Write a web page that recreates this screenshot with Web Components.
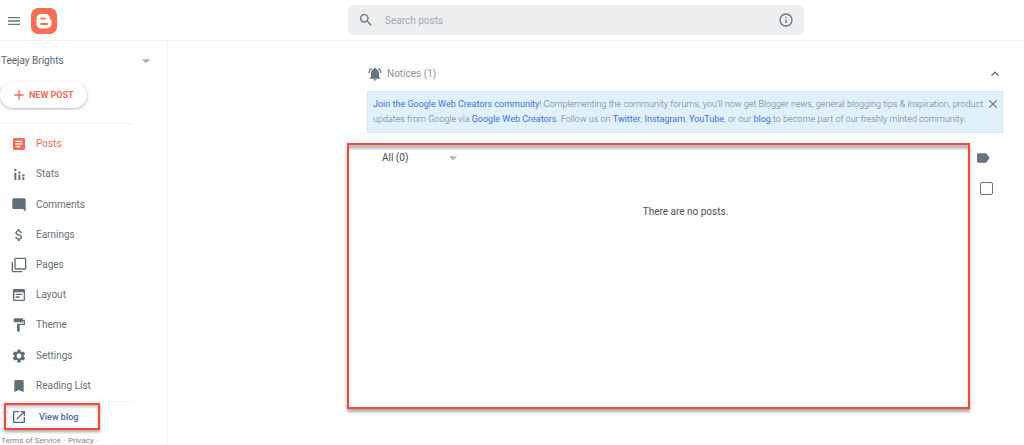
<!DOCTYPE html>
<html lang="en">
<head>
<meta charset="utf-8">
<meta name="viewport" content="width=device-width, initial-scale=1">
<title>Blogger: Posts</title>
<style>
  html, body { margin: 0; background: #fff; }
  body { font: 10px/16px Roboto, Arial, sans-serif; color: #5f6f77; --accent: #f96b52; --slate: #64757d; --line: #f1f1f2; }
</style>
</head>
<body>
<blog-app></blog-app>
<script>
const icons = {
  menu: '<path d="M3 18h18v-2H3v2zm0-5h18v-2H3v2zm0-7v2h18V6H3z"/>',
  search: '<path d="M15.5 14h-.79l-.28-.27A6.47 6.47 0 0 0 16 9.5 6.5 6.5 0 1 0 9.5 16c1.61 0 3.09-.59 4.23-1.57l.27.28v.79l5 4.99L20.49 19l-4.99-5zm-6 0a4.5 4.5 0 1 1 0-9 4.5 4.5 0 0 1 0 9z"/>',
  info: '<path d="M11 7h2v2h-2zm0 4h2v6h-2zm1-9a10 10 0 1 0 0 20 10 10 0 0 0 0-20zm0 18a8 8 0 1 1 0-16 8 8 0 0 1 0 16z"/>',
  drop: '<path d="M5 9l7 7 7-7z"/>',
  plus: '<path d="M19 13h-6v6h-2v-6H5v-2h6V5h2v6h6z"/>',
  posts: '<path d="M19 3H5a2 2 0 0 0-2 2v14c0 1.100.9 2 2 2h14a2 2 0 0 0 2-2V5a2 2 0 0 0-2-2zm-5 14H7v-2h7v2zm3-4H7v-2h10v2zm0-4H7V7h10v2z"/>',
  stats: '<path d="M5 10h3v11H5zM11 13h3v8h-3zM17 17h3v4h-3z"/><circle cx="6.500" cy="6" r="1.800"/><circle cx="12.500" cy="10" r="1.800"/><circle cx="18.500" cy="14" r="1.800"/>',
  comments: '<path d="M22 4a2 2 0 0 0-2-2H4a2 2 0 0 0-2 2v12c0 1.100.9 2 2 2h14l4 4z"/>',
  earnings: '<path d="M11.800 10.900c-2.270-.59-3-1.200-3-2.150 0-1.090 1.010-1.850 2.700-1.850 1.780 0 2.440.85 2.500 2.100h2.210c-.07-1.720-1.120-3.300-3.210-3.810V3h-3v2.160c-1.940.42-3.500 1.680-3.500 3.610 0 2.310 1.910 3.460 4.700 4.130 2.500.6 3 1.480 3 2.410 0 .69-.49 1.790-2.700 1.790-2.060 0-2.870-.92-2.980-2.100h-2.200c.12 2.190 1.760 3.420 3.680 3.830V21h3v-2.150c1.950-.37 3.500-1.500 3.500-3.550 0-2.840-2.430-3.810-4.700-4.400z"/>',
  pages: '<path d="M1 7h2v14h14v2H3a2 2 0 0 1-2-2zM7 1h14a2 2 0 0 1 2 2v14a2 2 0 0 1-2 2H7a2 2 0 0 1-2-2V3a2 2 0 0 1 2-2zm0 2v14h14V3z" fill-rule="evenodd"/>',
  layout: '<path d="M19 3H5a2 2 0 0 0-2 2v14a2 2 0 0 0 2 2h14a2 2 0 0 0 2-2V5a2 2 0 0 0-2-2zM5 19V8h14v11zM7 10h10v2H7zm0 4h6v2H7z" fill-rule="evenodd"/>',
  theme: '<path d="M18 4V3a1 1 0 0 0-1-1H5a1 1 0 0 0-1 1v4a1 1 0 0 0 1 1h12a1 1 0 0 0 1-1V6h1v4H9v11a1 1 0 0 0 1 1h2a1 1 0 0 0 1-1v-9h8V4z"/>',
  settings: '<path d="M19.140 12.940c.04-.3.06-.61.06-.94s-.02-.64-.07-.94l2.030-1.580a.49.49 0 0 0 .12-.61l-1.920-3.320a.49.49 0 0 0-.59-.22l-2.390.96a7 7 0 0 0-1.620-.94l-.36-2.540a.48.48 0 0 0-.48-.41h-3.840a.47.47 0 0 0-.47.41l-.36 2.540c-.59.24-1.130.57-1.620.94l-2.390-.96a.48.48 0 0 0-.59.22L2.740 8.870a.47.47 0 0 0 .12.61l2.030 1.580c-.05.3-.09.63-.09.940s.02.64.07.94l-2.030 1.580a.49.49 0 0 0-.12.61l1.920 3.320c.12.22.37.29.59.22l2.390-.96c.5.38 1.030.7 1.620.94l.36 2.540c.05.24.24.41.48.41h3.840c.24 0 .44-.17.47-.41l.36-2.540a6.800 6.800 0 0 0 1.620-.94l2.390.96c.22.08.47 0 .59-.22l1.920-3.320a.47.47 0 0 0-.12-.61zM12 15.600a3.600 3.600 0 1 1 0-7.200 3.600 3.600 0 0 1 0 7.200z"/>',
  reading: '<path d="M17 3H7a2 2 0 0 0-2 2v16l7-3 7 3V5a2 2 0 0 0-2-2z"/>',
  open: '<path d="M19 19H5V5h7V3H5a2 2 0 0 0-2 2v14a2 2 0 0 0 2 2h14a2 2 0 0 0 2-2v-7h-2zM14 3v2h3.590l-9.830 9.830 1.410 1.410L19 6.410V10h2V3z"/>',
  bell: '<path d="M7.580 4.080 6.150 2.650A10.400 10.400 0 0 0 2 10.500h2a8.500 8.500 0 0 1 3.580-6.420zm12.390 6.420h2a10.500 10.500 0 0 0-4.120-7.850l-1.420 1.430a8.500 8.500 0 0 1 3.540 6.420zM18 11c0-3.070-1.640-5.640-4.500-6.320V4a1.500 1.500 0 0 0-3 0v.68C7.630 5.360 6 7.920 6 11v5l-2 2v1h16v-1l-2-2zm-6 11a2 2 0 0 0 2-2h-4a2 2 0 0 0 2 2z"/>',
  up: '<path d="M7.410 15.410 12 10.830l4.590 4.580L18 14l-6-6-6 6z"/>',
  close: '<path d="M19 6.410 17.590 5 12 10.590 6.410 5 5 6.410 10.590 12 5 17.590 6.410 19 12 13.410 17.590 19 19 17.590 13.410 12z"/>',
  label: '<path d="M17.630 5.840A2 2 0 0 0 16 5H5a2 2 0 0 0-2 2v10a2 2 0 0 0 2 2h11c.67 0 1.270-.33 1.630-.84L22 12z"/>'
};

function define(name, css, markup) {
  customElements.define(name, class extends HTMLElement {
    connectedCallback() {
      if (this.shadowRoot) return;
      const root = this.attachShadow({ mode: 'open' });
      root.innerHTML = `<style>*{box-sizing:border-box}a{color:inherit;text-decoration:none}button{font:inherit;color:inherit;background:none;border:0;padding:0;cursor:pointer}${css}</style>` +
        (typeof markup === 'function' ? markup(this) : markup);
    }
  });
}

define('ui-icon',
  ':host{display:inline-flex;flex:none;width:16px;height:16px}svg{width:100%;height:100%;fill:currentColor}',
  el => `<svg viewBox="0 0 24 24" aria-hidden="true">${icons[el.getAttribute('name')]}</svg>`);

define('blogger-logo',
  ':host{display:block;width:26px;height:26px}svg{display:block}',
  `<svg width="26" height="26" viewBox="0 0 26 26" role="img" aria-label="Blogger">
    <rect width="26" height="26" rx="7" fill="#fb6c53"/>
    <path fill="#fff" d="M10 6h4.500a4.500 4.500 0 0 1 4.500 4.500v.3c0 .6.400.9 1 1.100.4.200.5.500.5.900v3a4.700 4.700 0 0 1-4.700 4.700H10a4.500 4.500 0 0 1-4.500-4.500v-5.500A4.500 4.500 0 0 1 10 6z"/>
    <path stroke="#fb6c53" stroke-width="2" stroke-linecap="round" d="M10.200 10.500h3.600M10.200 16h6"/>
  </svg>`);

define('search-box',
  `:host{display:block}
   form{display:flex;align-items:center;height:30px;padding:0 10px;border-radius:7px;background:#eceef0;color:var(--slate)}
   input{flex:1;min-width:0;margin:0 11px;padding:1px 0 0;border:0;outline:0;background:none;font:inherit;color:inherit}
   input::placeholder{color:#a2a9ad;opacity:1}
   button{display:flex}`,
  `<form role="search"><ui-icon name="search"></ui-icon><input type="text" aria-label="Search posts" placeholder="Search posts"><button type="button" aria-label="Search help"><ui-icon name="info"></ui-icon></button></form>`);

define('app-header',
  `:host{display:flex;align-items:center;height:41px;border-bottom:1px solid var(--line);color:var(--slate)}
   .brand{display:flex;align-items:center;gap:9px;width:348px;padding:2px 0 0 6px}
   .brand button{display:flex}
   search-box{flex:1;margin-right:220px}`,
  `<div class="brand"><button type="button" aria-label="Main menu"><ui-icon name="menu"></ui-icon></button><a href="#" aria-label="Blogger"><blogger-logo></blogger-logo></a></div><search-box></search-box>`);

define('nav-item',
  `:host{display:block}
   a{display:flex;align-items:center;gap:9px;height:100%;padding-left:11px}
   :host([active]){color:var(--accent)}`,
  el => `<a href="#"><ui-icon name="${el.getAttribute('icon')}"></ui-icon><slot></slot></a>`);

define('side-bar',
  `:host{display:block;border-right:1px solid var(--line)}
   .blog{display:flex;align-items:center;justify-content:space-between;width:100%;padding:12px 14px 10px 1px;color:#56666e}
   .blog ui-icon{color:#a9b1b5;width:14px;height:14px}
   .new{display:flex;align-items:center;gap:2px;height:26px;margin:3px 0 15px;padding:0 13px 0 11px;border-radius:13px;background:#fff;box-shadow:0 1px 3px #0000004d;color:var(--accent);font-size:9px;font-weight:700}
   nav{display:grid;grid-auto-rows:1fr;height:279px;margin-right:34px;padding-top:5px;border:solid var(--line);border-width:1px 0}
   .view{display:flex;align-items:center;gap:12px;width:96px;height:27px;margin:1px 0 0 4px;padding-left:5px;border:2px solid #f4483d;color:#4a63a5;font-size:9px;font-weight:500;box-shadow:0 2px 3px #00000059,inset 0 2px 3px #00000040}
   footer{margin-top:6px;padding-left:1px;font-size:8px;line-height:9px;color:#7b868b}
   footer a{margin-right:1px}`,
  `<button class="blog" type="button" aria-haspopup="listbox"><span>Teejay Brights</span><ui-icon name="drop"></ui-icon></button>
   <button class="new" type="button"><ui-icon name="plus"></ui-icon>NEW POST</button>
   <nav aria-label="Blog">
     <nav-item icon="posts" active>Posts</nav-item><nav-item icon="stats">Stats</nav-item><nav-item icon="comments">Comments</nav-item>
     <nav-item icon="earnings">Earnings</nav-item><nav-item icon="pages">Pages</nav-item><nav-item icon="layout">Layout</nav-item>
     <nav-item icon="theme">Theme</nav-item><nav-item icon="settings">Settings</nav-item><nav-item icon="reading">Reading List</nav-item>
   </nav>
   <a class="view" href="#"><ui-icon name="open"></ui-icon>View blog</a>
   <footer><a href="#">Terms of Service</a> · <a href="#">Privacy</a> ·</footer>`);

define('notice-panel',
  `:host{display:block}
   header{display:flex;align-items:center;gap:4px;height:16px;color:#899297}
   header>ui-icon{color:var(--slate)}
   header button{display:flex;margin-left:auto;color:var(--slate)}
   .note{display:flex;align-items:flex-start;margin-top:9px;padding:5px 2px 5px 5px;background:#e1f1fc;border:1px solid #cfe7f8;color:#6f7a81;font-size:9px;font-weight:300;line-height:15px}
   p{flex:1;margin:0}
   p a{color:#3f70f0;font-weight:400}
   .note button{display:flex;color:#64757d}
   .note ui-icon{width:14px;height:14px}`,
  `<header><ui-icon name="bell"></ui-icon><span>Notices (1)</span><button type="button" aria-label="Collapse notices"><ui-icon name="up"></ui-icon></button></header>
   <div class="note"><p><a href="#">Join the Google Web Creators community</a><span>! Complementing the community forums, you'll now get Blogger news, general blogging tips &amp; inspiration, product </span><span>updates from Google via </span><a href="#">Google Web Creators</a>. Follow us on <a href="#">Twitter</a>, <a href="#">Instagram</a>, <a href="#">YouTube</a>, or our <a href="#">blog</a> to become part of our freshly minted community.</p><button type="button" aria-label="Dismiss"><ui-icon name="close"></ui-icon></button></div>`);

define('post-list',
  `:host{display:grid;grid-template-columns:1fr 33px;margin-top:10px;color:#48545a}
   section{min-height:266px;padding:5px 33px;border:2px solid #f4483d;box-shadow:0 3px 3px #00000059,inset 0 4px 2px #00000040}
   .filter{display:flex;align-items:center;justify-content:space-between;width:78px;color:#3f4a50}
   .filter ui-icon{width:14px;height:14px;color:#a9b1b5}
   p{margin:38px 0 0;text-align:center;padding-left:54px}
   aside{display:flex;flex-direction:column;gap:16px;padding:7px 0 0 5px;color:var(--slate)}
   aside button{display:flex}
   input{appearance:none;width:13px;height:13px;margin:0 0 0 5px;border:1px solid var(--slate);border-radius:2px}`,
  `<section><button class="filter" type="button" aria-haspopup="listbox">All (0)<ui-icon name="drop"></ui-icon></button><p>There are no posts.</p></section>
   <aside><button type="button" aria-label="Labels"><ui-icon name="label"></ui-icon></button><input type="checkbox" aria-label="Select all posts"></aside>`);

define('blog-app',
  `:host{display:block}
   .body{display:grid;grid-template-columns:168px 1fr}
   main{padding:25px 21px 0 179px}
   notice-panel{margin-left:20px}`,
  `<app-header></app-header><div class="body"><side-bar></side-bar><main><notice-panel></notice-panel><post-list></post-list></main></div>`);
</script>
</body>
</html>
